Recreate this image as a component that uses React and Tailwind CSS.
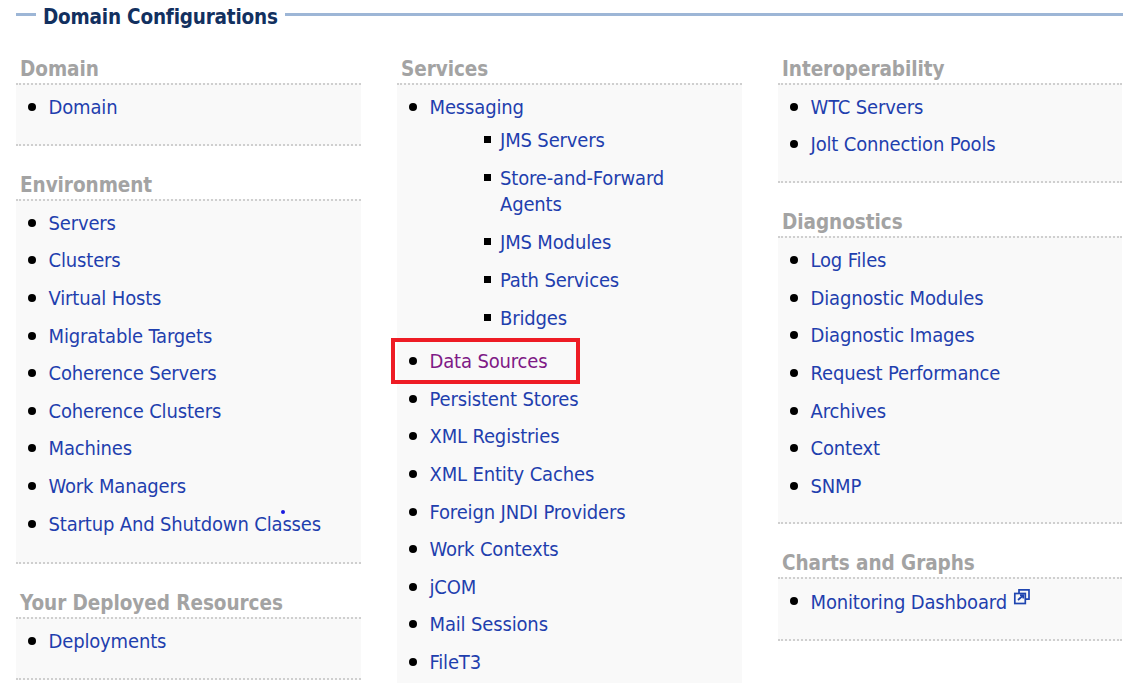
const link = "text-[#1f3fae]";

function ExternalIcon() {
  return (
    <svg width="18" height="18" viewBox="0 0 18 18" fill="none" stroke="#1f45b0" strokeWidth="1.7" className="mb-[9px] ml-[6px] shrink-0">
      <path d="M6 5V1.8h10v9.4h-3" />
      <rect x="1.8" y="5.5" width="10.5" height="10" />
      <path d="M5 12 10 7.5M7 7.2h3.3v3.3" />
    </svg>
  );
}

function Item({ text, visited, icon, sub, gap }) {
  return (
    <li className={sub ? "mb-[17px]" : gap}>
      <div className="flex">
        <span className="w-[32.5px] shrink-0 pl-[12px] pt-[9px]">
          <span className="block size-[8px] rounded-full bg-black" />
        </span>
        <span className={`flex items-center ${visited ? "text-[#7f1a86]" : link}`}>
          {text}
          {icon && <ExternalIcon />}
        </span>
      </div>
      {sub && (
        <ul className="mt-[7px]">
          {sub.map((s, i) => (
            <li key={s} className={`flex ${i < sub.length - 1 ? "mb-[12px]" : ""}`}>
              <span className="ml-[87px] w-[16px] shrink-0 pt-[9px]">
                <span className="block size-[7px] bg-black" />
              </span>
              <span className={`w-[180px] ${link}`}>{s}</span>
            </li>
          ))}
        </ul>
      )}
    </li>
  );
}

function Section({ title, items, bottom = "pb-[12px]", gap = "mb-[11.65px]" }) {
  return (
    <section>
      <h3 className="h-[31px] pl-[4px] text-[20.5px] font-bold leading-[35px] tracking-[-0.05px] text-[#a3a3a3]">{title}</h3>
      <ul className={`border-y-2 border-dotted border-[#cfcfcf] bg-[#f9f9f9] pt-[9px] ${bottom}`}>
        {items.map((it) => (
          <Item key={it.text} gap={gap} {...it} />
        ))}
      </ul>
    </section>
  );
}

const t = (...a) => a.map((text) => ({ text }));

export default function App() {
  return (
    <div className="h-[683px] w-[1123px] overflow-hidden bg-white pl-[16px] font-['DejaVu_Sans_Condensed','DejaVu_Sans',sans-serif] text-[20px] leading-[26px] tracking-[-0.15px]">
      <header className="flex h-[32px] items-start">
        <span className="mt-[13px] h-[3px] w-[20px] bg-[#9db6d6]" />
        <h2 className="px-[7px] text-[20.5px] font-bold leading-[34px] tracking-[-0.2px] text-[#12305f]">Domain Configurations</h2>
        <span className="mt-[13px] h-[3px] flex-1 bg-[#9db6d6]" />
      </header>
      <div className="mt-[20px] grid grid-cols-[345px_345px_344px] gap-x-[36px]">
        <div className="flex flex-col gap-[22px]">
          <Section title="Domain" items={t("Domain")} />
          <Section title="Environment" bottom="pb-[14px]" items={t("Servers", "Clusters", "Virtual Hosts", "Migratable Targets", "Coherence Servers", "Coherence Clusters", "Machines", "Work Managers", "Startup And Shutdown Classes")} />
          <Section title="Your Deployed Resources" items={t("Deployments")} />
        </div>
        <div>
          <Section
            title="Services"
            items={[
              { text: "Messaging", sub: ["JMS Servers", "Store-and-Forward Agents", "JMS Modules", "Path Services", "Bridges"] },
              { text: "Data Sources", visited: true },
              ...t("Persistent Stores", "XML Registries", "XML Entity Caches", "Foreign JNDI Providers", "Work Contexts", "jCOM", "Mail Sessions", "FileT3"),
            ]}
          />
        </div>
        <div className="flex flex-col gap-[22px]">
          <Section title="Interoperability" bottom="pb-[13px]" gap="mb-[11px]" items={t("WTC Servers", "Jolt Connection Pools")} />
          <Section title="Diagnostics" items={t("Log Files", "Diagnostic Modules", "Diagnostic Images", "Request Performance", "Archives", "Context", "SNMP")} />
          <Section title="Charts and Graphs" items={[{ text: "Monitoring Dashboard", icon: true }]} />
        </div>
      </div>
      <div className="absolute left-[391px] top-[338px] h-[46px] w-[189px] border-[4px] border-[#ee1c25]" />
      <span className="absolute left-[281px] top-[510px] size-[4px] rounded-full bg-[#1a1ae0]" />
    </div>
  );
}
